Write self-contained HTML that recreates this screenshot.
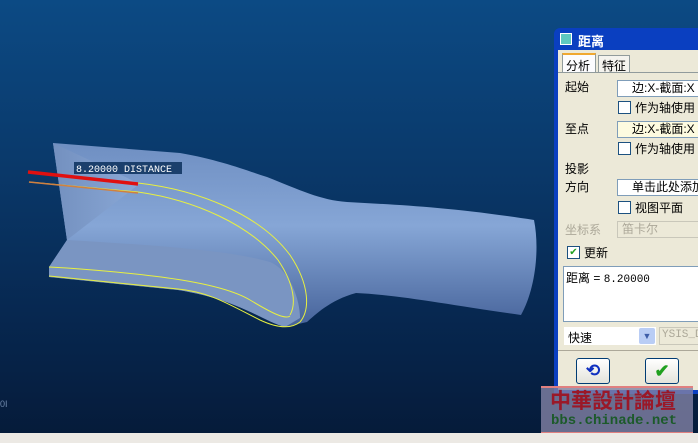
<!DOCTYPE html>
<html><head><meta charset="utf-8"><style>
*{margin:0;padding:0;box-sizing:border-box}
body{width:698px;height:443px;overflow:hidden;position:relative;background:linear-gradient(#0c4a84 0%,#0a3a6c 35%,#072851 70%,#051a38 100%);font-family:"Liberation Sans","Noto Sans CJK SC",sans-serif;font-size:12px;color:#000}
.a{position:absolute}
.dlg{left:554px;top:28px;width:150px;height:366px;background:#0a3fc0;border-radius:6px 0 0 0}
.body{left:558px;top:50px;width:140px;height:340px;background:#ece9d8}
.inp{position:absolute;background:#fff;border:1px solid #7f9db9;height:17px;font-size:12px;line-height:15px;padding-left:14px;white-space:nowrap;overflow:hidden;left:617px;width:85px}
.cb{position:absolute;width:13px;height:13px;border:1px solid #1c5180;background:#fff}
.lb{position:absolute;font-size:12px;white-space:nowrap}
</style></head><body>
<svg class="a" style="left:0;top:0" width="698" height="443">
<defs>
<linearGradient id="g" x1="0" y1="0" x2="0" y2="1"><stop offset="0" stop-color="#6f8fc2"/><stop offset=".45" stop-color="#86a6d6"/><stop offset="1" stop-color="#46639a"/></linearGradient>
<linearGradient id="w" x1="0" y1="0" x2="1" y2="0"><stop offset="0" stop-color="#7390bf"/><stop offset="1" stop-color="#8aa8d6"/></linearGradient>
</defs>
<path d="M53,143 L180,153 C220,160 245,170 267,177 C300,190 320,200 347,202 C400,205 450,207 534,220 C540,250 535,290 521,315 C450,305 400,295 356,293 C330,300 315,315 307,322 L285,327 C260,320 240,300 178,290 L49,277 L49,267 L67,240 Z" fill="url(#g)"/>
<path d="M53,143 L67,240 L138,185 L138,183 Z" fill="url(#w)"/>
<path d="M67,240 C150,245 230,250 270,262 C290,270 300,300 300,318 L285,327 C260,320 240,300 178,290 L49,277 L49,267 Z" fill="#7a95c2"/>
<path d="M28,172 L138,183 C200,190 260,215 290,255 C310,285 310,310 300,322 C290,330 275,327 260,320 C230,305 210,292 178,289 L49,276" fill="none" stroke="#e8f040" stroke-width="1"/>
<path d="M29,182 L138,192 C195,200 250,225 278,260 C295,285 296,305 290,315" fill="none" stroke="#e8f040" stroke-width="1"/>
<path d="M49,267 L67,268 C150,274 220,282 250,300 C270,312 285,320 290,316" fill="none" stroke="#e8f040" stroke-width="1"/>
<path d="M29,182 L138,193" stroke="#d08040" stroke-width="1.5"/>
<line x1="28" y1="172" x2="138" y2="184" stroke="#e01010" stroke-width="3.5"/>
<rect x="74" y="162" width="108" height="12" fill="#1b3f6c"/>
<text x="76" y="172" fill="#fff" font-family="Liberation Mono,monospace" font-size="10">8.20000  DISTANCE</text>
<text x="0" y="407" fill="#6f88aa" font-size="9">0I</text>
</svg>
<div class="a dlg"></div>
<div class="a" style="left:560px;top:33px;width:12px;height:12px;background:#5fc8c0;border:1px solid #fff"></div>
<div class="a" style="left:578px;top:31px;color:#fff;font-weight:bold;font-size:13px">距离</div>
<div class="a body"></div>
<div class="a" style="left:562px;top:53px;width:34px;height:20px;border:1px solid #919b9c;border-top:2px solid #f0a830;background:#fcfcfe;font-size:12px;padding:2px 0 0 3px">分析</div>
<div class="a" style="left:598px;top:55px;width:32px;height:18px;border:1px solid #919b9c;background:#f4f3ee;font-size:12px;padding:1px 0 0 3px">特征</div>
<div class="a" style="left:558px;top:72px;width:140px;height:1px;background:#919b9c"></div>
<div class="lb" style="left:565px;top:78px">起始</div>
<div class="inp" style="top:80px">边:X-截面:X</div>
<div class="cb" style="left:618px;top:101px"></div><div class="lb" style="left:635px;top:99px">作为轴使用</div>
<div class="lb" style="left:565px;top:120px">至点</div>
<div class="inp" style="top:121px;background:#fdfbe0">边:X-截面:X</div>
<div class="cb" style="left:618px;top:142px"></div><div class="lb" style="left:635px;top:140px">作为轴使用</div>
<div class="lb" style="left:565px;top:160px">投影</div>
<div class="lb" style="left:565px;top:178px">方向</div>
<div class="inp" style="top:179px">单击此处添加</div>
<div class="cb" style="left:618px;top:201px"></div><div class="lb" style="left:635px;top:199px">视图平面</div>
<div class="lb" style="left:565px;top:221px;color:#aca899">坐标系</div>
<div class="inp" style="top:221px;background:#ece9d8;border-color:#c9c7ba;color:#aca899;padding-left:4px">笛卡尔</div>
<div class="cb" style="left:567px;top:246px;font-size:10px;line-height:11px;color:#21a121;text-align:center">✔</div><div class="lb" style="left:584px;top:244px">更新</div>
<div class="a" style="left:563px;top:266px;width:140px;height:56px;background:#fff;border:1px solid #7f9db9;padding:2px;font-size:12px">距离 = <span style="font-family:'Liberation Mono',monospace;font-size:11px">8.20000</span></div>
<div class="a" style="left:564px;top:327px;width:92px;height:18px;background:#fff;font-size:12px;padding:2px 4px">快速</div>
<div class="a" style="left:639px;top:328px;width:16px;height:16px;background:#b9cdf5;border-radius:2px;color:#3d5da8;font-size:9px;text-align:center;line-height:16px">▼</div>
<div class="a" style="left:659px;top:327px;width:45px;height:18px;border:1px solid #c9c7ba;color:#aca899;font-family:'Liberation Mono',monospace;font-size:11px;padding:1px 2px">YSIS_D</div>
<div class="a" style="left:558px;top:350px;width:140px;height:1px;background:#aca899"></div>
<div class="a" style="left:576px;top:358px;width:34px;height:26px;border:1px solid #003c74;border-radius:3px;background:linear-gradient(#fff,#e3e3db);color:#1030c0;font-size:17px;text-align:center;line-height:24px;font-weight:bold">⟲</div>
<div class="a" style="left:645px;top:358px;width:34px;height:26px;border:1px solid #003c74;border-radius:3px;background:linear-gradient(#fff,#e3e3db);color:#20a020;font-size:18px;text-align:center;line-height:25px;font-weight:bold">✔</div>
<div class="a" style="left:541px;top:386px;width:152px;height:48px;background:rgba(130,130,165,.8);border-top:2px solid #e08080;border-bottom:2px solid #e08080"></div>
<div class="a" style="left:550px;top:388px;color:#9a1828;font-size:21px;line-height:24px;font-weight:bold;font-family:'Noto Sans CJK SC',sans-serif;white-space:nowrap">中華設計論壇</div>
<div class="a" style="left:551px;top:413px;color:#1c5a2a;font-size:14px;line-height:16px;font-weight:bold;font-family:'Liberation Mono',monospace;white-space:nowrap">bbs.chinade.net</div>
<div class="a" style="left:0;top:433px;width:698px;height:10px;background:#ece9e4"></div>
</body></html>
